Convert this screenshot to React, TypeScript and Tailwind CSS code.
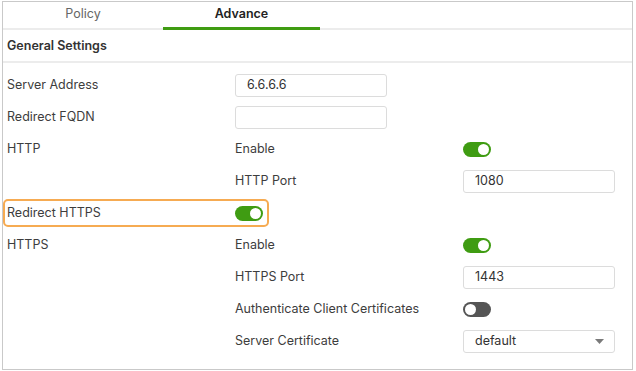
import React from 'react';

const font = { fontFamily: 'Inter, "Liberation Sans", sans-serif' };

function Toggle({ on = true }: { on?: boolean }) {
  return (
    <span
      className={`relative inline-flex h-[15px] w-[28px] items-center rounded-full ${on ? 'bg-[#3f9c12]' : 'bg-[#555555]'}`}
    >
      <span
        className={`absolute top-[2px] h-[11px] w-[11px] rounded-full bg-white ${on ? 'left-[15px]' : 'left-[2px]'}`}
      />
    </span>
  );
}

function Input({ value = '', select = false }: { value?: string; select?: boolean }) {
  return (
    <div className="flex h-[23px] w-[152px] items-center justify-between rounded-[3px] border border-[#dcdcdc] bg-white pl-[11px] pr-[10px] text-[#333]">
      <span>{value}</span>
      {select && (
        <svg width="9" height="5" viewBox="0 0 9 5">
          <path d="M0 0h9L4.5 5z" fill="#7a7a7a" />
        </svg>
      )}
    </div>
  );
}

function Row({ label, mid, right, highlight }: { label?: string; mid?: React.ReactNode; right?: React.ReactNode; highlight?: boolean }) {
  return (
    <div className="flex h-[32px] items-center">
      <div className={`flex h-[28px] items-center ${highlight ? 'w-[266px] -ml-[4px] pl-[2px] rounded-[5px] border-2 border-[#f6ab52]' : 'w-[228px]'}`}>
        <span className={highlight ? 'w-[228px]' : ''}>{label}</span>
        {highlight && mid}
      </div>
      {!highlight && (
        <>
          <div className="flex w-[228px] items-center">{mid}</div>
          <div className="flex items-center">{right}</div>
        </>
      )}
    </div>
  );
}

export default function App() {
  return (
    <div className="h-[371px] w-[636px] bg-white pl-[2px] pt-[1px]" style={font}>
      <div className="h-[369px] w-[631px] border border-[#c9c9c9] text-[12.5px] text-[#3d3d3d]">
        <div className="flex h-[28px] border-b-2 border-[#ececec] pb-[1px]">
          <div className="flex w-[160px] items-center justify-center text-[#666]">Policy</div>
          <div className="relative flex w-[157px] items-center justify-center font-semibold text-[#222]">
            Advance
            <span className="absolute -bottom-[3px] left-0 h-[3px] w-full bg-[#3f9c12]" />
          </div>
        </div>
        <div className="flex h-[33px] items-center border-b-2 border-[#ececec] pl-[4px] pt-[1px] font-semibold text-[#333]">
          General Settings
        </div>
        <div className="pl-[4px] pt-[6px]">
          <Row label="Server Address" mid={<Input value="6.6.6.6" />} />
          <Row label="Redirect FQDN" mid={<Input />} />
          <Row label="HTTP" mid="Enable" right={<Toggle />} />
          <Row mid="HTTP Port" right={<Input value="1080" />} />
          <Row label="Redirect HTTPS" mid={<Toggle />} highlight />
          <Row label="HTTPS" mid="Enable" right={<Toggle />} />
          <Row mid="HTTPS Port" right={<Input value="1443" />} />
          <Row mid="Authenticate Client Certificates" right={<Toggle on={false} />} />
          <Row mid="Server Certificate" right={<Input value="default" select />} />
        </div>
      </div>
    </div>
  );
}
